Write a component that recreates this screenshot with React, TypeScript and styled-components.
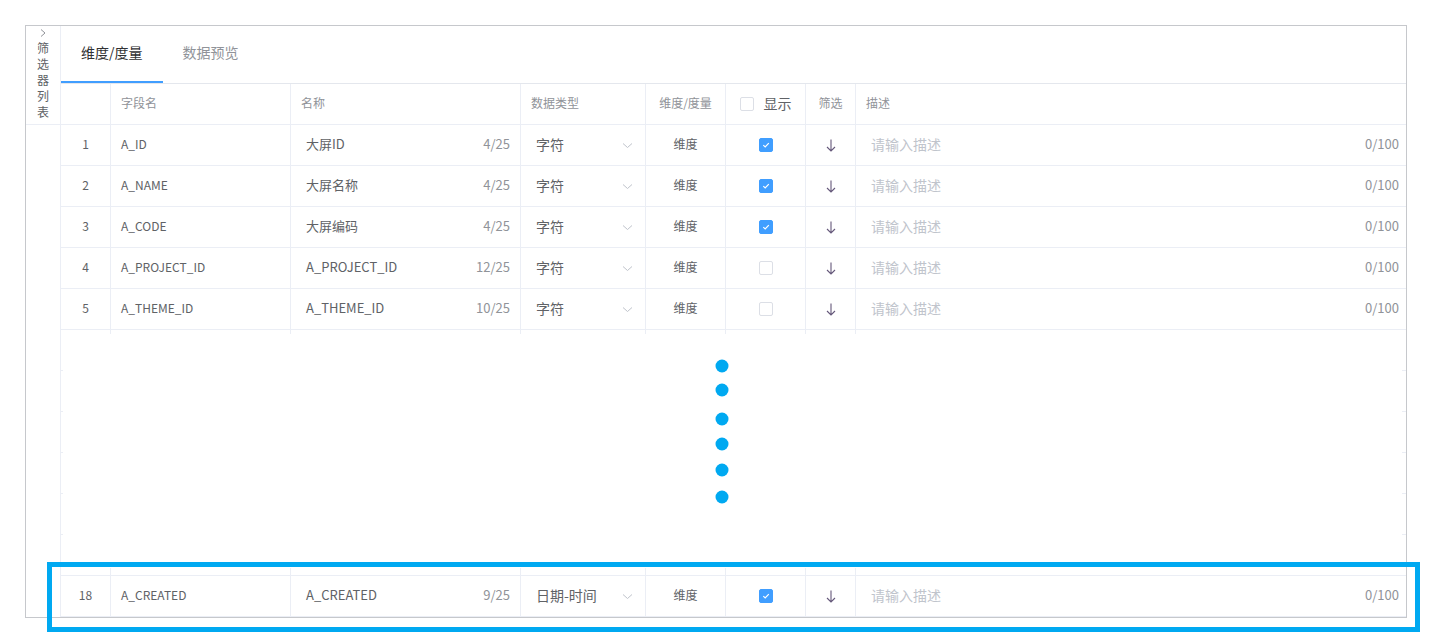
import React from 'react';
import styled, { createGlobalStyle } from 'styled-components';

interface FieldRow {
    index: number;
    field: string;
    name: string;
    count: string;
    dataType: string;
    kind: string;
    shown: boolean;
}

const rows: FieldRow[] = [
    { index: 1, field: 'A_ID', name: '大屏ID', count: '4/25', dataType: '字符', kind: '维度', shown: true },
    { index: 2, field: 'A_NAME', name: '大屏名称', count: '4/25', dataType: '字符', kind: '维度', shown: true },
    { index: 3, field: 'A_CODE', name: '大屏编码', count: '4/25', dataType: '字符', kind: '维度', shown: true },
    { index: 4, field: 'A_PROJECT_ID', name: 'A_PROJECT_ID', count: '12/25', dataType: '字符', kind: '维度', shown: false },
    { index: 5, field: 'A_THEME_ID', name: 'A_THEME_ID', count: '10/25', dataType: '字符', kind: '维度', shown: false },
];

const lastRow: FieldRow = {
    index: 18,
    field: 'A_CREATED',
    name: 'A_CREATED',
    count: '9/25',
    dataType: '日期-时间',
    kind: '维度',
    shown: true,
};

const GlobalStyle = createGlobalStyle`
    html, body {
        margin: 0;
        padding: 0;
        background: #ffffff;
    }
    body {
        font-family: "Noto Sans CJK SC", "Noto Sans", sans-serif;
        color: #606266;
    }
`;

const Page = styled.div`
    position: relative;
    padding: 25px 0 26px 25px;
`;

const Frame = styled.div`
    width: 1382px;
    box-sizing: border-box;
    border: 1px solid #c6c8cc;
    display: flex;
`;

const SidePanel = styled.div`
    width: 34px;
    flex: none;
`;

const SideTab = styled.div`
    height: 99px;
    box-sizing: border-box;
    border-bottom: 1px solid #ebeef5;
    padding-top: 3px;
    display: flex;
    flex-direction: column;
    align-items: center;
`;

const SideLabel = styled.div`
    width: 12px;
    margin-top: 3px;
    font-size: 12px;
    line-height: 16px;
    color: #606266;
    word-break: break-all;
`;

const Main = styled.div`
    flex: 1;
    border-left: 1px solid #ebeef5;
    min-width: 0;
`;

const TabBar = styled.div`
    height: 58px;
    box-sizing: border-box;
    border-bottom: 1px solid #e4e7ed;
    display: flex;
`;

const Tab = styled.div<{ $active: boolean }>`
    height: 57px;
    box-sizing: border-box;
    padding: 0 20px 3px;
    display: flex;
    align-items: center;
    font-size: 14px;
    color: ${props => props.$active ? '#303133' : '#909399'};
    border-bottom: 2px solid ${props => props.$active ? '#409eff' : 'transparent'};
`;

const Row = styled.div`
    display: grid;
    grid-template-columns: 50px 180px 230px 125px 80px 80px 50px 1fr;
    height: 41px;
    box-sizing: border-box;
    border-bottom: 1px solid #ebeef5;
`;

const Cell = styled.div<{ $align?: 'left' | 'center' | 'between'; $pad?: string; $size?: number }>`
    box-sizing: border-box;
    border-right: 1px solid #ebeef5;
    display: flex;
    align-items: center;
    justify-content: ${props =>
        props.$align === 'center' ? 'center' : props.$align === 'between' ? 'space-between' : 'flex-start'};
    padding: ${props => props.$pad ?? '0 10px'};
    padding-bottom: 3px;
    font-size: ${props => props.$size ?? 12}px;
    color: #606266;
    white-space: nowrap;
    overflow: hidden;

    &:last-child {
        border-right: none;
    }
`;

const HeadText = styled.span`
    color: #909399;
    font-size: 12px;
`;

const ShowLabel = styled.span`
    margin-left: 10px;
    font-size: 14px;
    color: #606266;
`;

const NameText = styled.span`
    font-size: 13px;
    color: #606266;
`;

const Count = styled.span`
    font-size: 13px;
    color: #909399;
`;

const Placeholder = styled.span`
    font-size: 14px;
    color: #c0c4cc;
`;

const Box = styled.span<{ $checked: boolean }>`
    width: 14px;
    height: 14px;
    margin-top: 3px;
    box-sizing: border-box;
    border-radius: 2px;
    border: 1px solid ${props => props.$checked ? '#409eff' : '#dcdfe6'};
    background: ${props => props.$checked ? '#409eff' : '#ffffff'};
    display: inline-flex;
    align-items: center;
    justify-content: center;
`;

const IconSlot = styled.span`
    display: inline-flex;
    margin-top: 3px;
`;

const BlankArea = styled.div`
    position: relative;
`;

const Mask = styled.div`
    position: absolute;
    top: 4px;
    bottom: 8px;
    left: 2px;
    right: 4px;
    background: #ffffff;
    padding: 25px 0 0 652px;
    box-sizing: border-box;
`;

const Highlight = styled.div`
    position: absolute;
    left: 47px;
    top: 562px;
    width: 1373px;
    height: 70px;
    box-sizing: border-box;
    border: 5px solid #00a9f1;
    pointer-events: none;
`;

const Checkbox: React.FC<{ checked: boolean }> = ({ checked }) => (
    <Box $checked={checked}>
        {checked && (
            <svg width="10" height="10" viewBox="0 0 10 10">
                <path d="M2.3 5.1 L4.2 6.9 L7.8 3.2" fill="none" stroke="#fff" strokeWidth="1.2" />
            </svg>
        )}
    </Box>
);

const SelectArrow = () => (
    <IconSlot>
        <svg width="11" height="7" viewBox="0 0 11 7">
            <path d="M1 1.5 L5.5 5.5 L10 1.5" fill="none" stroke="#c0c4cc" strokeWidth="1" />
        </svg>
    </IconSlot>
);

const DownArrow = () => (
    <IconSlot>
        <svg width="10" height="13" viewBox="0 0 10 13">
            <path d="M5 0.5 V12 M1 8 L5 12 L9 8" fill="none" stroke="#65587a" strokeWidth="1.1" />
        </svg>
    </IconSlot>
);

const Chevron = () => (
    <svg width="6" height="8" viewBox="0 0 6 8">
        <path d="M1 0.5 L5 4 L1 7.5" fill="none" stroke="#909399" strokeWidth="1" />
    </svg>
);

const DataRow: React.FC<{ row: FieldRow }> = ({ row }) => (
    <Row>
        <Cell $align="center">{row.index}</Cell>
        <Cell>{row.field}</Cell>
        <Cell $align="between" $pad="0 10px 0 15px">
            <NameText>{row.name}</NameText>
            <Count>{row.count}</Count>
        </Cell>
        <Cell $align="between" $pad="0 12px 0 15px" $size={14}>
            <span>{row.dataType}</span>
            <SelectArrow />
        </Cell>
        <Cell $align="center">{row.kind}</Cell>
        <Cell $align="center">
            <Checkbox checked={row.shown} />
        </Cell>
        <Cell $align="center">
            <DownArrow />
        </Cell>
        <Cell $align="between" $pad="0 7px 0 15px">
            <Placeholder>请输入描述</Placeholder>
            <Count>0/100</Count>
        </Cell>
    </Row>
);

const EmptyRow = () => (
    <Row>
        {Array.from({ length: 8 }).map((_, i) => (
            <Cell key={i} />
        ))}
    </Row>
);

export default function App() {
    return (
        <Page>
            <GlobalStyle />
            <Frame>
                <SidePanel>
                    <SideTab>
                        <Chevron />
                        <SideLabel>筛选器列表</SideLabel>
                    </SideTab>
                </SidePanel>
                <Main>
                    <TabBar>
                        <Tab $active>维度/度量</Tab>
                        <Tab $active={false}>数据预览</Tab>
                    </TabBar>

                    <Row>
                        <Cell />
                        <Cell><HeadText>字段名</HeadText></Cell>
                        <Cell><HeadText>名称</HeadText></Cell>
                        <Cell><HeadText>数据类型</HeadText></Cell>
                        <Cell $align="center"><HeadText>维度/度量</HeadText></Cell>
                        <Cell $align="center">
                            <Checkbox checked={false} />
                            <ShowLabel>显示</ShowLabel>
                        </Cell>
                        <Cell $align="center"><HeadText>筛选</HeadText></Cell>
                        <Cell><HeadText>描述</HeadText></Cell>
                    </Row>

                    {rows.map(row => (
                        <DataRow key={row.index} row={row} />
                    ))}

                    {/* hidden rows, covered by an ellipsis */}
                    <BlankArea>
                        {Array.from({ length: 6 }).map((_, i) => (
                            <EmptyRow key={i} />
                        ))}
                        <Mask>
                            <svg width="14" height="146" viewBox="0 0 14 146">
                                {[7, 31, 60, 85, 111, 138].map(cy => (
                                    <circle key={cy} cx="7" cy={cy} r="6.5" fill="#00a9f1" />
                                ))}
                            </svg>
                        </Mask>
                    </BlankArea>

                    <DataRow row={lastRow} />
                </Main>
            </Frame>
            <Highlight />
        </Page>
    );
}
